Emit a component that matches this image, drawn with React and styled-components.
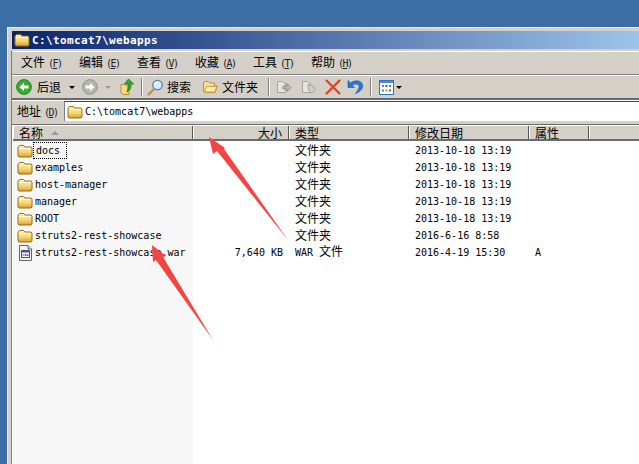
import React, { useId } from 'react';
import styled, { createGlobalStyle } from 'styled-components';

const GlobalStyle = createGlobalStyle`
  html, body { margin: 0; padding: 0; height: 100%; overflow: hidden; background: #3a6ea5; }
`;

const mono = '"DejaVu Sans Mono", "Liberation Mono", monospace';
const cjk = '"Noto Sans CJK SC", "Noto Sans", sans-serif';

const Desktop = styled.div`
  position: relative;
  width: 639px;
  height: 464px;
  overflow: hidden;
  padding: 27px 0 0 7px;
  box-sizing: border-box;
  background: #3a6ea5;
  font-family: ${mono};
  font-size: 10px;
  color: #000;
`;

const Window = styled.div`
  width: 660px;
  height: 437px;
  box-sizing: border-box;
  background: #d4d0c8;
  border-top: 1px solid #f0eee8;
  border-left: 1px solid #f0eee8;
  padding: 3px 0 0 3px;
  display: flex;
  flex-direction: column;
`;

const TitleBar = styled.div`
  height: 18px;
  margin-left: 1px;
  display: flex;
  align-items: center;
  gap: 2px;
  padding-left: 2px;
  background: linear-gradient(90deg, #0a246a 0%, #a6caf0 100%);
  color: #fff;
  font-weight: 700;
  font-size: 11px;
  letter-spacing: 0.38px;
  flex: none;
`;

const Inner = styled.div`
  flex: 1;
  min-height: 0;
  margin-top: 2px;
  display: flex;
  flex-direction: column;
  border-left: 1px solid #808080;
`;

const MenuBar = styled.div`
  height: 24px;
  flex: none;
  box-sizing: border-box;
  display: flex;
  align-items: center;
  padding-left: 9px;
  border-top: 1px solid #fff;
  border-bottom: 1px solid #808080;
`;

const MenuItem = styled.span`
  width: 58px;
  flex: none;
  font-family: ${cjk};
  font-size: 12px;
  line-height: 16px;
  white-space: nowrap;
`;

const Key = styled.span`
  font-family: ${mono};
  font-size: 10px;
  margin-left: 3px;
  letter-spacing: -1.5px;
  color: #222;

  u { text-underline-offset: 1px; }
`;

const ToolBar = styled.div`
  height: 25px;
  flex: none;
  box-sizing: border-box;
  display: flex;
  align-items: center;
  padding-left: 4px;
  border-top: 1px solid #fff;
  border-bottom: 2px solid #6b6b6b;
`;

const Tool = styled.span`
  display: flex;
  align-items: center;
  flex: none;
  margin-left: ${p => p.$left || 0}px;
  gap: ${p => p.$gap || 0}px;
  font-family: ${cjk};
  font-size: 12px;
  line-height: 16px;
  white-space: nowrap;
`;

const Sep = styled.span`
  width: 1px;
  height: 18px;
  flex: none;
  margin-left: ${p => p.$left}px;
  background: #808080;
  border-right: 1px solid #fff;
`;

const Caret = styled.span`
  flex: none;
  width: 0;
  height: 0;
  margin-left: ${p => p.$left}px;
  border-left: 3px solid transparent;
  border-right: 3px solid transparent;
  border-top: 3px solid ${p => p.$color || '#000'};
`;

const AddressBar = styled.div`
  height: 21px;
  flex: none;
  box-sizing: border-box;
  display: flex;
  align-items: stretch;
  padding-left: 5px;
  border-top: 1px solid #fff;
  font-family: ${cjk};
  font-size: 12px;
  line-height: 20px;
`;

const AddressLabel = styled.span`
  width: 47px;
  flex: none;
  white-space: nowrap;
`;

const AddressField = styled.div`
  flex: 1;
  display: flex;
  align-items: center;
  gap: 2px;
  padding: 1px 0 0 2px;
  background: #fff;
  border-left: 1px solid #808080;
  border-top: 1px solid #404040;
  font-family: ${mono};
  font-size: 10px;
`;

const ListPane = styled.div`
  flex: 1;
  min-height: 0;
  margin-top: 3px;
  background: #fff;
  border-top: 1px solid #6b6b6b;
`;

const columns = '180px 96px 120px 120px 60px 1fr';

const HeaderRow = styled.div`
  display: grid;
  grid-template-columns: ${columns};
  height: 16px;
  box-sizing: border-box;
  background: #d4d0c8;
  border-top: 1px solid #fff;
  border-bottom: 2px solid #6b6b6b;
  margin-left: 1px;
`;

const HeaderCell = styled.div`
  display: flex;
  align-items: center;
  justify-content: ${p => (p.$right ? 'flex-end' : 'flex-start')};
  gap: 8px;
  box-sizing: border-box;
  padding: ${p => (p.$right ? '0 6px 0 0' : '0 0 0 6px')};
  border-right: 1px solid #555;
  font-family: ${cjk};
  font-size: 12px;
  line-height: 13px;
  box-shadow: inset 1px 0 0 #fff;
`;

const SortMark = styled.span`
  width: 0;
  height: 0;
  border-left: 4px solid transparent;
  border-right: 4px solid transparent;
  border-bottom: 4px solid #999;
`;

const Rows = styled.div`
  height: 330px;
  margin-left: 1px;
  padding-top: 1px;
  background: linear-gradient(90deg, #f7f7f7 180px, #fff 180px);
`;

const Row = styled.div`
  display: grid;
  grid-template-columns: ${columns};
  height: 17px;
  align-items: center;
  white-space: nowrap;
`;

const NameCell = styled.div`
  display: flex;
  align-items: center;
  gap: 1px;
  padding-left: 4px;
  height: 17px;
`;

const NameText = styled.span`
  padding: 0 ${p => (p.$focused ? '2px' : '1px')};
  line-height: 15px;
  outline: ${p => (p.$focused ? '1px dotted #000' : 'none')};
  min-width: ${p => (p.$focused ? '28px' : '0')};
`;

const SizeCell = styled.div`
  text-align: right;
  padding-right: 6px;
`;

const TypeCell = styled.div`
  padding-left: 6px;
  margin-top: -2px;
  font-family: ${cjk};
  font-size: 12px;
  line-height: 17px;
`;

const TypeLatin = styled.span`
  font-family: ${mono};
  font-size: 10px;
`;

const PlainCell = styled.div`
  padding-left: 6px;
`;

const Arrows = styled.svg`
  position: absolute;
  left: 0;
  top: 0;
  pointer-events: none;
`;

const Folder = () => {
  const id = useId();
  return (
    <svg width="16" height="16" viewBox="0 0 16 16" style={{ flex: 'none' }}>
      <defs>
        <linearGradient id={id} x1="0" y1="0" x2="0" y2="1">
          <stop offset="0" stopColor="#fff2b8" />
          <stop offset="0.55" stopColor="#f6d775" />
          <stop offset="1" stopColor="#dd9f2c" />
        </linearGradient>
      </defs>
      <path d="M1 4 2.5 2.5H6.5L8 4H14L15 5V13L14 14H2L1 13Z" fill={`url(#${id})`} stroke="#93701f" strokeWidth="1" />
      <path d="M2 5.5H14" stroke="#fffbe2" strokeWidth="1" />
    </svg>
  );
};

const OpenFolder = () => (
  <svg width="17" height="16" viewBox="0 0 17 16" style={{ flex: 'none' }}>
    <path d="M1.5 3.5 3 2.5H6.5L8 4H12.5V7H15.5L13 13.5H3L1.5 12.5Z" fill="#f7dd90" stroke="#bd9334" />
    <path d="M4.5 7.5H15L12.5 13H2.5Z" fill="#fcedb8" stroke="#cda548" />
  </svg>
);

const BackIcon = ({ gray }) => {
  const fill = gray ? '#b4b4b0' : '#3cab32';
  const edge = gray ? '#8e8e8a' : '#1f7d22';
  return (
    <svg width="16" height="16" viewBox="0 0 16 16" style={{ flex: 'none', transform: gray ? 'scaleX(-1)' : 'none' }}>
      <circle cx="8" cy="8" r="7.4" fill={fill} stroke={edge} strokeWidth="0.9" />
      <path d="M3.5 8 8 3.8V6.4H12.5V9.6H8V12.2Z" fill="#fff" />
    </svg>
  );
};

const UpIcon = () => (
  <svg width="15" height="18" viewBox="0 0 15 18" style={{ flex: 'none' }}>
    <path d="M1 6.5H5L6.5 8H9V16.5H3L1 15Z" fill="#f7dc88" stroke="#bb9230" />
    <path d="M8.5 1 13.5 6H11C11 10 10.5 12 7 14 8 11 8.3 8.5 8 6H4.5Z" fill="#35a52c" stroke="#1d7220" strokeWidth="0.8" />
  </svg>
);

const SearchIcon = () => (
  <svg width="17" height="17" viewBox="0 0 17 17" style={{ flex: 'none' }}>
    <path d="M1.5 15.5 6.5 10.5" stroke="#d08a3c" strokeWidth="2.4" strokeLinecap="round" />
    <circle cx="10.5" cy="6" r="4.7" fill="#dcedfb" stroke="#4b7fc0" strokeWidth="1.3" />
    <path d="M7.8 5.5C8.2 4 9.4 3.2 10.8 3.2" stroke="#fff" strokeWidth="1.1" fill="none" />
  </svg>
);

const CopyGhost = ({ mirrored }) => (
  <svg width="16" height="16" viewBox="0 0 16 16" style={{ flex: 'none' }}>
    <path d="M1.5 2.5H6.5L8 4H9.5V13.5H1.5Z" fill="#e6e4de" stroke="#a5a39d" />
    {mirrored ? (
      <path d="M7 5.5 13 7.5 14.5 11 10 14.5 7.5 11Z" fill="#d0cec8" stroke="#a5a39d" />
    ) : (
      <path d="M7 7H11V4.5L15 8.5 11 12.5V10H7Z" fill="#b8b6b0" stroke="#94928c" />
    )}
  </svg>
);

const DeleteIcon = () => (
  <svg width="16" height="16" viewBox="0 0 16 16" style={{ flex: 'none' }}>
    <path d="M1.5 1.5 14.5 14.5M14.5 1.5 1.5 14.5" stroke="#e2401c" strokeWidth="2.2" strokeLinecap="round" />
  </svg>
);

const UndoIcon = () => (
  <svg width="17" height="16" viewBox="0 0 17 16" style={{ flex: 'none' }}>
    <path d="M1 1.5V8.5H7.5L5.2 6.2C7 4.8 10.6 4.6 11.8 6.6 12.8 8.6 11 11 8.5 14.5 12.5 13 16 10 15.6 6.2 15 1.5 8 .3 3.6 4Z" fill="#2a76d2" stroke="#1856a8" strokeWidth="0.6" />
  </svg>
);

const ViewsIcon = () => (
  <svg width="15" height="15" viewBox="0 0 15 15" style={{ flex: 'none' }}>
    <rect x="0.5" y="0.5" width="14" height="14" fill="#fff" stroke="#2d73c4" />
    <rect x="1" y="1" width="13" height="2" fill="#4a8ad8" />
    <rect x="3" y="5" width="2" height="2" fill="#4a7fc0" />
    <rect x="6.5" y="5" width="2" height="2" fill="#555" />
    <rect x="10" y="5" width="2" height="2" fill="#3aa04a" />
    <rect x="3" y="9.5" width="2" height="2" fill="#4a7fc0" />
    <rect x="6.5" y="9.5" width="2" height="2" fill="#e08a2a" />
    <rect x="10" y="9.5" width="2" height="2" fill="#3a6fb0" />
  </svg>
);

const WarIcon = () => (
  <svg width="16" height="16" viewBox="0 0 16 16" style={{ flex: 'none' }}>
    <path d="M2.5 .5H11L14.5 4V15.5H2.5Z" fill="#f2f2f2" stroke="#666" />
    <path d="M11 .5V4H14.5" fill="#d8d8d8" stroke="#666" />
    <rect x="4.5" y="5.5" width="8" height="7" fill="#fff" stroke="#4a4f8a" />
    <rect x="5" y="6" width="7" height="1.5" fill="#3d56a8" />
    <rect x="5.5" y="9" width="2" height="2" fill="#d2a020" />
    <rect x="8" y="9" width="1.5" height="2" fill="#2c6fc0" />
    <rect x="10" y="9.5" width="1.5" height="1.5" fill="#c03030" />
  </svg>
);

const menus = [
  ['文件', 'F'],
  ['编辑', 'E'],
  ['查看', 'V'],
  ['收藏', 'A'],
  ['工具', 'T'],
  ['帮助', 'H'],
];

const files = [
  { name: 'docs', type: '文件夹', date: '2013-10-18 13:19', focused: true },
  { name: 'examples', type: '文件夹', date: '2013-10-18 13:19' },
  { name: 'host-manager', type: '文件夹', date: '2013-10-18 13:19' },
  { name: 'manager', type: '文件夹', date: '2013-10-18 13:19' },
  { name: 'ROOT', type: '文件夹', date: '2013-10-18 13:19' },
  { name: 'struts2-rest-showcase', type: '文件夹', date: '2016-6-16 8:58' },
  { name: 'struts2-rest-showcase.war', size: '7,640 KB', ext: 'WAR', type: '文件', date: '2016-4-19 15:30', attr: 'A', war: true },
];

export default function App() {
  return (
    <Desktop>
      <GlobalStyle />
      <Window>
        <TitleBar>
          <Folder />
          C:\tomcat7\webapps
        </TitleBar>
        <Inner>
          <MenuBar>
            {menus.map(([label, key]) => (
              <MenuItem key={key}>
                {label}
                <Key>(<u>{key}</u>)</Key>
              </MenuItem>
            ))}
          </MenuBar>
          <ToolBar>
            <Tool $gap={5}><BackIcon />后退</Tool>
            <Caret $left={8} />
            <Tool $left={7}><BackIcon gray /></Tool>
            <Caret $left={7} $color="#9a9a9a" />
            <Tool $left={9}><UpIcon /></Tool>
            <Sep $left={6} />
            <Tool $left={4} $gap={3}><SearchIcon />搜索</Tool>
            <Tool $left={11} $gap={3}><OpenFolder />文件夹</Tool>
            <Sep $left={10} />
            <Tool $left={6}><CopyGhost /></Tool>
            <Tool $left={9}><CopyGhost mirrored /></Tool>
            <Tool $left={8}><DeleteIcon /></Tool>
            <Tool $left={6}><UndoIcon /></Tool>
            <Sep $left={6} />
            <Tool $left={7}><ViewsIcon /></Tool>
            <Caret $left={2} />
          </ToolBar>
          <AddressBar>
            <AddressLabel>地址<Key>(<u>D</u>)</Key></AddressLabel>
            <AddressField>
              <Folder />
              C:\tomcat7\webapps
            </AddressField>
          </AddressBar>
          <ListPane>
            <HeaderRow>
              <HeaderCell>名称<SortMark /></HeaderCell>
              <HeaderCell $right>大小</HeaderCell>
              <HeaderCell>类型</HeaderCell>
              <HeaderCell>修改日期</HeaderCell>
              <HeaderCell>属性</HeaderCell>
              <HeaderCell />
            </HeaderRow>
            <Rows>
              {files.map(f => (
                <Row key={f.name}>
                  <NameCell>
                    {f.war ? <WarIcon /> : <Folder />}
                    <NameText $focused={f.focused}>{f.name}</NameText>
                  </NameCell>
                  <SizeCell>{f.size}</SizeCell>
                  <TypeCell>
                    {f.ext && <TypeLatin>{f.ext} </TypeLatin>}
                    {f.type}
                  </TypeCell>
                  <PlainCell>{f.date}</PlainCell>
                  <PlainCell>{f.attr}</PlainCell>
                </Row>
              ))}
            </Rows>
          </ListPane>
        </Inner>
      </Window>
      <Arrows width="639" height="464" viewBox="0 0 639 464">
        <polygon points="209,137 225,148 224,149 288,240 217,151 213,154" fill="#f44444" />
        <polygon points="152,245 166,256 163,257 213,340 156,260 153,262" fill="#f44444" />
      </Arrows>
    </Desktop>
  );
}
